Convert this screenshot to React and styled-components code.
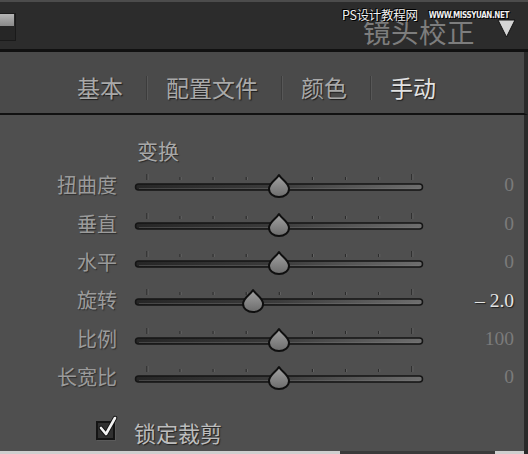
import React from "react";
import styled, { createGlobalStyle } from "styled-components";

const GlobalStyle = createGlobalStyle`
  html, body {
    margin: 0;
    padding: 0;
    background: #4f4f4f;
  }
  * {
    box-sizing: border-box;
  }
`;

const CJK = `"Noto Sans CJK SC", "Noto Sans", sans-serif`;

const Frame = styled.div`
  width: 528px;
  height: 454px;
  overflow: hidden;
  display: flex;
  flex-direction: column;
  background: #4f4f4f;
  font-family: ${CJK};
`;

const Header = styled.div`
  position: relative;
  height: 52px;
  flex: none;
  display: flex;
  align-items: center;
  justify-content: space-between;
  background: #2c2c2c;
  border-top: 2px solid #4c4c4c;
  border-bottom: 3px solid #111;
  padding-right: 12px;
`;

const PanelIcon = styled.div`
  width: 16px;
  height: 28px;
  margin-top: 2px;
  background: #262626;
  border: 1px solid #1a1a1a;
  border-left: none;
  display: flex;
  flex-direction: column;
  &::before {
    content: "";
    height: 12px;
    width: 14px;
    background: linear-gradient(#b5b5b5, #8a8a8a);
  }
`;

const TitleGroup = styled.div`
  display: flex;
  align-items: center;
  gap: 22px;
  margin-top: 12px;
`;

const Title = styled.div`
  font-size: 27.5px;
  line-height: 1;
  color: #7d7d7d;
  letter-spacing: 0.5px;
`;

const Arrow = styled.svg`
  margin-top: -8px;
`;

const Watermark = styled.div`
  position: absolute;
  top: 7px;
  left: 342px;
  display: flex;
  align-items: center;
  gap: 11px;
  color: #f0f0f0;
  text-shadow: 0 0 1px #000, 1px 1px 0 #000, -1px -1px 0 #000;
  white-space: nowrap;
`;

const WatermarkCn = styled.span`
  font-size: 12.5px;
  line-height: 1;
  letter-spacing: -0.3px;
`;

const WatermarkEn = styled.span`
  font-family: "DejaVu Sans Condensed", "DejaVu Sans", sans-serif;
  font-size: 8px;
  font-weight: bold;
  letter-spacing: -0.4px;
`;

const TabBar = styled.div`
  height: 63px;
  flex: none;
  display: flex;
  align-items: center;
  padding: 10px 0 0 77px;
  background: #4a4a4a;
  border-bottom: 2px solid #111;
  border-right: 4px solid #2a2a2a;
`;

const Tab = styled.div`
  font-size: 23px;
  line-height: 1;
  color: ${(p) => (p.$active ? "#e2e2e2" : "#a9a9a9")};
  text-shadow: 1px 1px 1px #1e1e1e;
`;

const TabSep = styled.div`
  width: 1px;
  height: 24px;
  margin: 0 19px 0 23px;
  background: #3c3c3c;
  box-shadow: 1px 0 0 #575757;
`;

const Panel = styled.div`
  flex: 1;
  display: flex;
  flex-direction: column;
  padding-top: 20px;
  border-right: 4px solid #2a2a2a;
  background: #4f4f4f;
`;

const SectionTitle = styled.div`
  font-size: 21px;
  line-height: 30px;
  color: #a8a8a8;
  padding-left: 137px;
  text-shadow: 1px 1px 1px #2a2a2a;
`;

const Rows = styled.div`
  display: flex;
  flex-direction: column;
  margin-top: 1px;
`;

const Row = styled.div`
  height: 38.4px;
  display: grid;
  grid-template-columns: 117px 290px 73px;
  column-gap: 17px;
  align-items: center;
`;

const Label = styled.div`
  text-align: right;
  font-size: 20px;
  line-height: 1;
  color: #9b9b9b;
  text-shadow: 1px 1px 1px #2e2e2e;
`;

const Value = styled.div`
  margin-left: -17px;
  text-align: right;
  font-family: "Liberation Serif", "DejaVu Serif", serif;
  font-size: 19.5px;
  line-height: 1;
  color: ${(p) => (p.$bright ? "#e4e4e4" : "#7b7b7b")};
  text-shadow: ${(p) => (p.$bright ? "1px 1px 1px #1e1e1e" : "none")};
`;

const CheckRow = styled.div`
  display: flex;
  align-items: center;
  gap: 19px;
  padding-left: 96px;
  margin-top: 21px;
`;

const CheckBox = styled.div`
  position: relative;
  width: 19px;
  height: 19px;
  background: #303030;
  border: 2px solid #141414;
  box-shadow: 1px 1px 0 #5a5a5a;
  svg {
    position: absolute;
    left: 0px;
    top: -8px;
  }
`;

const CheckLabel = styled.div`
  font-size: 22px;
  line-height: 1;
  margin-top: 4px;
  color: #bdbdbd;
  text-shadow: 1px 1px 1px #222;
`;

const BottomStrip = styled.div`
  height: 3px;
  flex: none;
  margin-top: auto;
  background: linear-gradient(
    to right,
    #cfcfcf 0,
    #cfcfcf 340px,
    #3a3a3a 340px,
    #3a3a3a 495px,
    #cfcfcf 495px
  );
`;

const TICKS = [0, 1, 2, 3, 4, 5, 6, 7, 8];

function Slider({ pos, id }) {
  const cx = 1 + pos * 288;
  return (
    <svg width="290" height="38" viewBox="0 0 290 38">
      <defs>
        <linearGradient id={`tr-${id}`} x1="0" x2="1" y1="0" y2="0">
          <stop offset="0" stopColor="#262626" />
          <stop offset="0.5" stopColor="#3c3c3c" />
          <stop offset="1" stopColor="#6e6e6e" />
        </linearGradient>
        <linearGradient id={`th-${id}`} x1="0" x2="0" y1="0" y2="1">
          <stop offset="0" stopColor="#a2a2a2" />
          <stop offset="1" stopColor="#6c6c6c" />
        </linearGradient>
      </defs>
      {TICKS.map((i) => {
        const x = 13 + i * 33.1;
        const edge = i === 0 || i === 8;
        return (
          <g key={i}>
            <line
              x1={x}
              x2={x}
              y1={edge ? 8 : 11}
              y2={14}
              stroke="#2b2b2b"
              strokeWidth="1.3"
            />
            <line
              x1={x + 1}
              x2={x + 1}
              y1={edge ? 8 : 11}
              y2={14}
              stroke="#6a6a6a"
              strokeWidth="0.8"
            />
          </g>
        );
      })}
      <rect
        x="1.5"
        y="18"
        width="287"
        height="6"
        rx="3"
        fill={`url(#tr-${id})`}
        stroke="#151515"
        strokeWidth="1.5"
      />
      <line x1="5" x2="285" y1="22.5" y2="22.5" stroke="#808080" strokeWidth="0.6" opacity="0.6" />
      <path
        d={`M${cx} 9 C${cx + 3} 14 ${cx + 10} 17 ${cx + 10} 23 A10 8 0 0 1 ${cx - 10} 23 C${cx - 10} 17 ${cx - 3} 14 ${cx} 9 Z`}
        fill={`url(#th-${id})`}
        stroke="#0f0f0f"
        strokeWidth="2"
        strokeLinejoin="round"
      />
    </svg>
  );
}

const ROWS = [
  { label: "扭曲度", pos: 0.5, value: "0" },
  { label: "垂直", pos: 0.5, value: "0" },
  { label: "水平", pos: 0.5, value: "0" },
  { label: "旋转", pos: 0.41, value: "– 2.0", bright: true },
  { label: "比例", pos: 0.5, value: "100" },
  { label: "长宽比", pos: 0.5, value: "0" },
];

const TABS = ["基本", "配置文件", "颜色", "手动"];

export default function App() {
  return (
    <>
      <GlobalStyle />
      <Frame>
        <Header>
          <PanelIcon />
          <TitleGroup>
            <Title>镜头校正</Title>
            <Arrow width="19" height="20" viewBox="0 0 19 20">
              <path d="M1 2 L18 2 L9.5 19 Z" fill="#d4d4d4" stroke="#111" strokeWidth="1" />
            </Arrow>
          </TitleGroup>
          <Watermark>
            <WatermarkCn>PS设计教程网</WatermarkCn>
            <WatermarkEn>WWW.MISSYUAN.NET</WatermarkEn>
          </Watermark>
        </Header>
        <TabBar>
          {TABS.map((t, i) => (
            <React.Fragment key={t}>
              {i > 0 && <TabSep />}
              <Tab $active={t === "手动"}>{t}</Tab>
            </React.Fragment>
          ))}
        </TabBar>
        <Panel>
          <SectionTitle>变换</SectionTitle>
          <Rows>
            {ROWS.map((r, i) => (
              <Row key={r.label}>
                <Label>{r.label}</Label>
                <Slider pos={r.pos} id={i} />
                <Value $bright={r.bright}>{r.value}</Value>
              </Row>
            ))}
          </Rows>
          <CheckRow>
            <CheckBox>
              <svg width="20" height="22" viewBox="0 0 20 22">
                <path
                  d="M3 13 L8 19 L17 3"
                  fill="none"
                  stroke="#111"
                  strokeWidth="4.5"
                  strokeLinecap="round"
                  strokeLinejoin="round"
                />
                <path
                  d="M3 13 L8 19 L17 3"
                  fill="none"
                  stroke="#f2f2f2"
                  strokeWidth="2.6"
                  strokeLinecap="round"
                  strokeLinejoin="round"
                />
              </svg>
            </CheckBox>
            <CheckLabel>锁定裁剪</CheckLabel>
          </CheckRow>
          <BottomStrip />
        </Panel>
      </Frame>
    </>
  );
}
